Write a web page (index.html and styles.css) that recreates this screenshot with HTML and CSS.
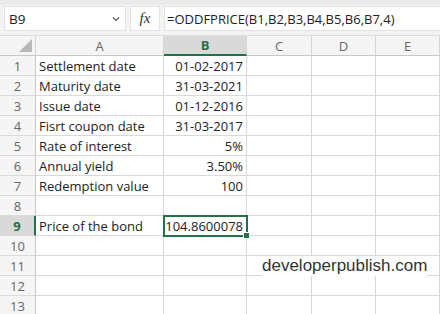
FILE: index.html
```html
<!DOCTYPE html>
<html>
<head>
<meta charset="utf-8">
<link rel="stylesheet" href="styles.css">
</head>
<body>
<div class="app">
  <div class="fbar">
    <div class="namebox"><span>B9</span>
      <svg class="chev" width="8" height="6" viewBox="0 0 8 6"><path d="M1 1.5 L4 4.5 L7 1.5" fill="none" stroke="#555" stroke-width="1.2"/></svg>
    </div>
    <div class="fxbox"><span class="fx">fx</span></div>
    <div class="formula">=ODDFPRICE(B1,B2,B3,B4,B5,B6,B7,4)</div>
  </div>
  <div class="grid">
    <div class="hd corner"><span class="tri"></span></div>
    <div class="hd col">A</div>
    <div class="hd col sel">B</div>
    <div class="hd col">C</div>
    <div class="hd col">D</div>
    <div class="hd col">E</div>
    <div class="hd col last"></div>

    <div class="rh">1</div><div class="c">Settlement date</div><div class="c r">01-02-2017</div><div class="c"></div><div class="c"></div><div class="c"></div><div class="c"></div>
    <div class="rh">2</div><div class="c">Maturity date</div><div class="c r">31-03-2021</div><div class="c"></div><div class="c"></div><div class="c"></div><div class="c"></div>
    <div class="rh">3</div><div class="c">Issue date</div><div class="c r">01-12-2016</div><div class="c"></div><div class="c"></div><div class="c"></div><div class="c"></div>
    <div class="rh">4</div><div class="c">Fisrt coupon date</div><div class="c r">31-03-2017</div><div class="c"></div><div class="c"></div><div class="c"></div><div class="c"></div>
    <div class="rh">5</div><div class="c">Rate of interest</div><div class="c r">5%</div><div class="c"></div><div class="c"></div><div class="c"></div><div class="c"></div>
    <div class="rh">6</div><div class="c">Annual yield</div><div class="c r">3.50%</div><div class="c"></div><div class="c"></div><div class="c"></div><div class="c"></div>
    <div class="rh">7</div><div class="c">Redemption value</div><div class="c r">100</div><div class="c"></div><div class="c"></div><div class="c"></div><div class="c"></div>
    <div class="rh">8</div><div class="c"></div><div class="c"></div><div class="c"></div><div class="c"></div><div class="c"></div><div class="c"></div>
    <div class="rh rsel">9</div><div class="c">Price of the bond</div><div class="c r active">104.8600078<span class="handle"></span></div><div class="c"></div><div class="c"></div><div class="c"></div><div class="c"></div>
    <div class="rh">10</div><div class="c"></div><div class="c"></div><div class="c"></div><div class="c"></div><div class="c"></div><div class="c"></div>
    <div class="rh">11</div><div class="c"></div><div class="c"></div><div class="c wm-cell"><span class="wm">developerpublish.com</span></div><div class="c"></div><div class="c"></div><div class="c"></div>
    <div class="rh">12</div><div class="c"></div><div class="c"></div><div class="c"></div><div class="c"></div><div class="c"></div><div class="c"></div>
    <div class="rh">13</div><div class="c"></div><div class="c"></div><div class="c"></div><div class="c"></div><div class="c"></div><div class="c"></div>
  </div>
</div>
</body>
</html>
```

FILE: styles.css
```css
html, body {
  margin: 0;
  padding: 0;
  background: #ffffff;
  overflow: hidden;
}
.app {
  width: 440px;
  height: 314px;
  overflow: hidden;
  font-family: "Open Sans", "Noto Sans", sans-serif;
}
.fbar {
  height: 36px;
  box-sizing: border-box;
  background: #f3f3f3;
  border-top: 5px solid #ebebeb;
  padding: 1px 0 0 4px;
  display: flex;
  gap: 4px;
  align-items: flex-start;
  border-bottom: 1px solid #dcdcdc;
}
.namebox {
  width: 122px;
  height: 25px;
  box-sizing: border-box;
  background: #fff;
  border: 1px solid #e2e2e2;
  display: flex;
  align-items: center;
  justify-content: space-between;
  padding: 0 5px 0 4px;
  font-size: 13.5px;
  color: #222;
}
.fxbox {
  width: 30px;
  height: 25px;
  box-sizing: border-box;
  background: #fff;
  border: 1px solid #e2e2e2;
  display: flex;
  align-items: center;
  justify-content: center;
}
.fx {
  font-family: "Liberation Serif", serif;
  font-style: italic;
  font-size: 15px;
  color: #333;
}
.formula {
  flex: 1;
  height: 25px;
  box-sizing: border-box;
  background: #fff;
  border: 1px solid #e2e2e2;
  border-right: none;
  display: flex;
  align-items: center;
  padding-left: 2px;
  font-size: 13px;
  color: #222;
  white-space: nowrap;
}
.grid {
  display: grid;
  grid-template-columns: 36px 128px 83px 65px 64px 64px 60px;
  grid-template-rows: 20px repeat(13, 20px);
}
.hd {
  background: #f5f5f5;
  border-right: 1px solid #d6d6d6;
  border-bottom: 1px solid #c8c8c8;
  box-sizing: border-box;
  color: #666;
  font-size: 13px;
  display: flex;
  align-items: center;
  justify-content: center;
}
.corner {
  position: relative;
}
.tri {
  position: absolute;
  right: 3px;
  bottom: 3px;
  width: 0;
  height: 0;
  border-left: 13px solid transparent;
  border-bottom: 13px solid #b8b8b8;
}
.col.sel {
  background: #d9d9d9;
  color: #217346;
  font-weight: 700;
  border-bottom: 2px solid #217346;
}
.col.last {
  border-right: none;
}
.rh {
  background: #f5f5f5;
  border-right: 1px solid #c8c8c8;
  border-bottom: 1px solid #dadada;
  box-sizing: border-box;
  color: #666;
  font-size: 13px;
  display: flex;
  align-items: center;
  justify-content: center;
}
.rh.rsel {
  background: #d9d9d9;
  color: #217346;
  font-weight: 700;
  border-right: 2px solid #217346;
}
.c {
  border-right: 1px solid #d9d9d9;
  border-bottom: 1px solid #d9d9d9;
  box-sizing: border-box;
  font-size: 13px;
  color: #222;
  display: flex;
  align-items: center;
  padding: 0 3px;
  white-space: nowrap;
}
.c.r {
  justify-content: flex-end;
}
.active {
  position: relative;
  outline: 2px solid #217346;
  outline-offset: -1px;
  z-index: 2;
}
.handle {
  position: absolute;
  right: -4px;
  bottom: -4px;
  width: 5px;
  height: 5px;
  background: #217346;
  border: 1px solid #fff;
}
.wm-cell {
  position: relative;
  overflow: visible;
}
.wm {
  position: absolute;
  left: 15px;
  top: 0;
  font-family: "Liberation Sans", Arial, sans-serif;
  font-size: 17px;
  line-height: 20px;
  color: #333;
  background: #fff;
  z-index: 3;
}
```
